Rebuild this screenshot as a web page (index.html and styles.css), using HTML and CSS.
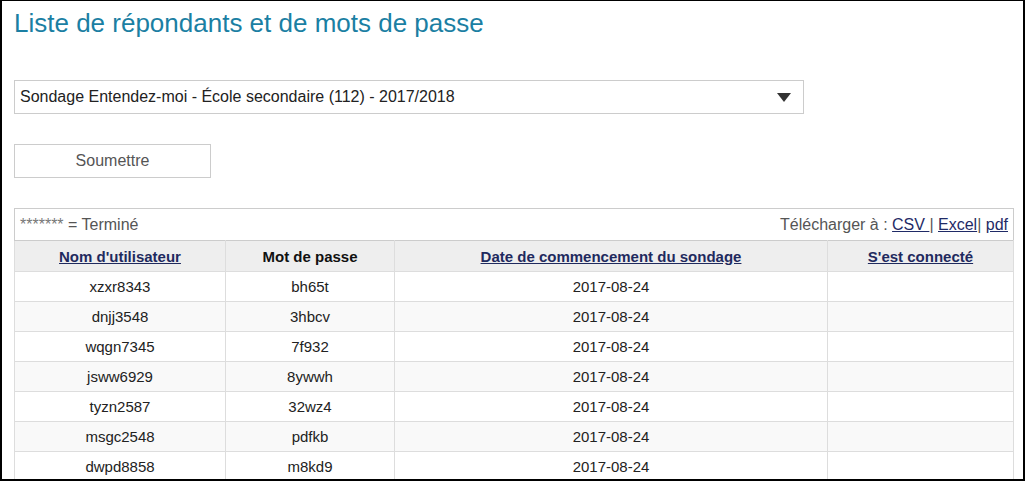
FILE: index.html
```html
<!DOCTYPE html>
<html lang="fr">
<head>
<meta charset="utf-8">
<title>Liste de répondants et de mots de passe</title>
<link rel="stylesheet" href="styles.css">
</head>
<body>
<div class="frame">
  <h1 class="title">Liste de répondants et de mots de passe</h1>
  <div class="select">
    <span class="select-text">Sondage Entendez-moi - École secondaire (112) - 2017/2018</span>
    <svg class="arrow" width="14" height="9" viewBox="0 0 14 9"><polygon points="0,0 14,0 7,9" fill="#333"/></svg>
  </div>
  <button class="submit">Soumettre</button>
  <div class="panel">
    <div class="panel-bar">
      <span class="legend"><span class="stars">*******</span> = Terminé</span>
      <span class="download">Télécharger à : <a href="#">CSV </a>| <a href="#">Excel</a>| <a href="#">pdf</a></span>
    </div>
    <table class="grid">
      <colgroup><col class="c1"><col class="c2"><col class="c3"><col class="c4"></colgroup>
      <thead>
        <tr><th><a href="#">Nom d'utilisateur</a></th><th>Mot de passe</th><th><a href="#">Date de commencement du sondage</a></th><th><a href="#">S'est connecté</a></th></tr>
      </thead>
      <tbody>
        <tr><td>xzxr8343</td><td>bh65t</td><td>2017-08-24</td><td></td></tr>
        <tr><td>dnjj3548</td><td>3hbcv</td><td>2017-08-24</td><td></td></tr>
        <tr><td>wqgn7345</td><td>7f932</td><td>2017-08-24</td><td></td></tr>
        <tr><td>jsww6929</td><td>8ywwh</td><td>2017-08-24</td><td></td></tr>
        <tr><td>tyzn2587</td><td>32wz4</td><td>2017-08-24</td><td></td></tr>
        <tr><td>msgc2548</td><td>pdfkb</td><td>2017-08-24</td><td></td></tr>
        <tr><td>dwpd8858</td><td>m8kd9</td><td>2017-08-24</td><td></td></tr>
      </tbody>
    </table>
  </div>
</div>
</body>
</html>
```
FILE: styles.css
```css
html, body {
  margin: 0;
  padding: 0;
  background: #fff;
}
body {
  font-family: "Liberation Sans", Arial, sans-serif;
  color: #222;
}
.frame {
  box-sizing: border-box;
  width: 1025px;
  height: 481px;
  overflow: hidden;
  border: 2px solid #000;
  border-top-width: 1px;
  padding: 7px 9px 0 12px;
}
.title {
  margin: 0;
  font-size: 26px;
  font-weight: normal;
  line-height: 30px;
  color: #1b7fa3;
}
.select {
  margin-top: 42px;
  width: 790px;
  height: 34px;
  box-sizing: border-box;
  border: 1px solid #ccc;
  display: flex;
  align-items: center;
  justify-content: space-between;
  padding: 0 12px 0 5px;
  font-size: 16px;
  color: #222;
}
.arrow { display: block; margin-top: 1px; }
.submit {
  display: block;
  margin-top: 30px;
  width: 197px;
  height: 34px;
  box-sizing: border-box;
  border: 1px solid #ccc;
  background: #fff;
  font-family: "Liberation Sans", Arial, sans-serif;
  font-size: 16px;
  color: #555;
  padding: 0;
}
.panel {
  margin-top: 30px;
  width: 1000px;
  box-sizing: border-box;
  border: 1px solid #ccc;
  border-bottom: none;
}
.panel-bar {
  height: 31px;
  display: flex;
  align-items: center;
  justify-content: space-between;
  padding: 0 5px;
  font-size: 16px;
  color: #555;
}
.stars { color: #777; }
.download a { color: #1f2a66; text-decoration: underline; }
.grid {
  width: 999px;
  border-collapse: collapse;
  table-layout: fixed;
  margin-left: -1px;
}
.c1 { width: 211px; }
.c2 { width: 169px; }
.c3 { width: 433px; }
.c4 { width: 186px; }
.grid th, .grid td {
  border: 1px solid #ddd;
  text-align: center;
  padding: 0;
  height: 29px;
}
.grid th {
  background: #eee;
  font-size: 15px;
  font-weight: bold;
  color: #111;
  height: 30px;
  border-top-color: #ccc;
}
.grid th a { color: #1f2a5e; text-decoration: underline; }
.grid td { font-size: 15px; color: #222; }
.grid tbody tr:nth-child(even) td { background: #f9f9f9; }
```
